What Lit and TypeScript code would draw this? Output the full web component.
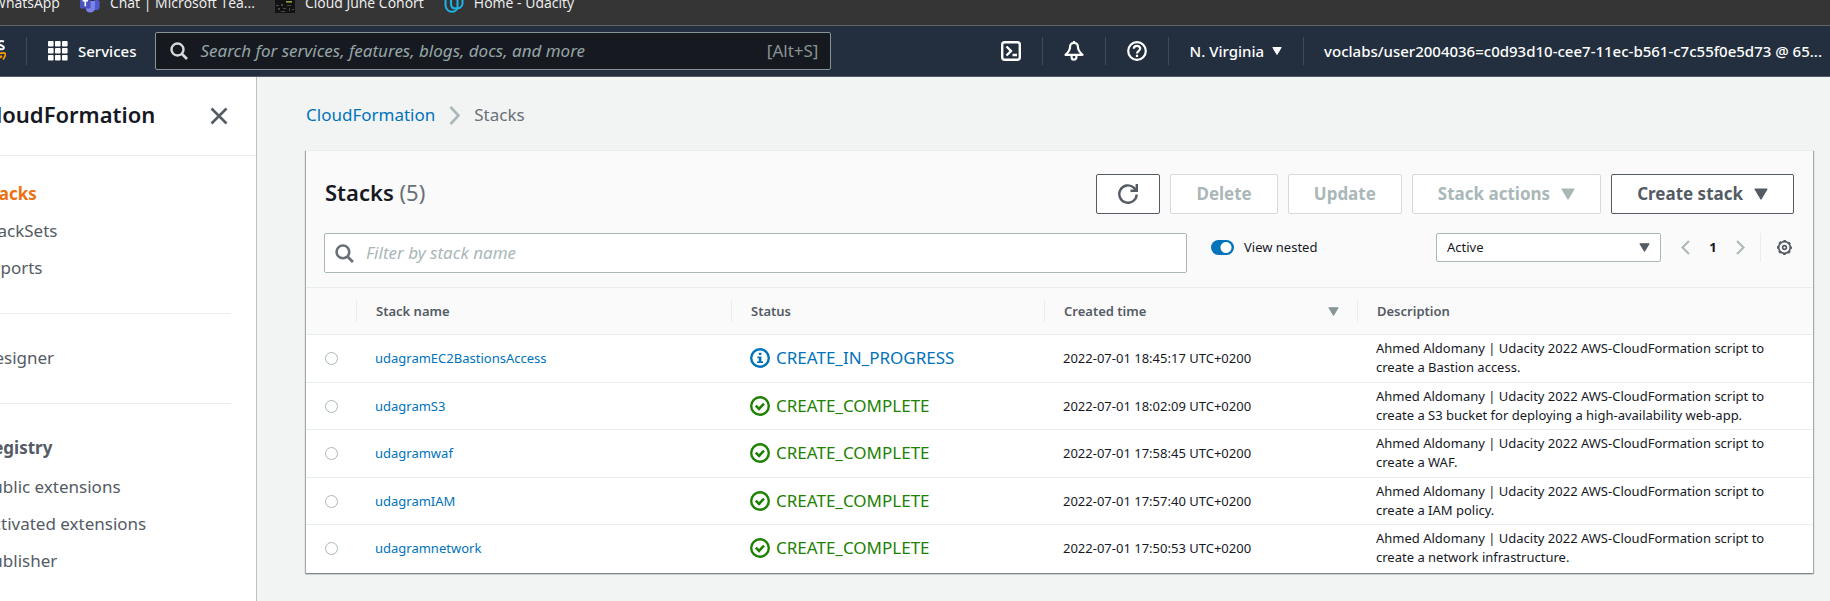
import { LitElement, html, css, svg } from "lit";
import { customElement, state } from "lit/decorators.js";

interface Stack {
  name: string;
  status: "CREATE_IN_PROGRESS" | "CREATE_COMPLETE";
  created: string;
  description: string;
}

const SCRIPT = "Ahmed Aldomany | Udacity 2022 AWS-CloudFormation script to create a ";

const STACKS: Stack[] = [
  { name: "udagramEC2BastionsAccess", status: "CREATE_IN_PROGRESS", created: "2022-07-01 18:45:17 UTC+0200", description: SCRIPT + "Bastion access." },
  { name: "udagramS3", status: "CREATE_COMPLETE", created: "2022-07-01 18:02:09 UTC+0200", description: SCRIPT + "S3 bucket for deploying a high-availability web-app." },
  { name: "udagramwaf", status: "CREATE_COMPLETE", created: "2022-07-01 17:58:45 UTC+0200", description: SCRIPT + "WAF." },
  { name: "udagramIAM", status: "CREATE_COMPLETE", created: "2022-07-01 17:57:40 UTC+0200", description: SCRIPT + "IAM policy." },
  { name: "udagramnetwork", status: "CREATE_COMPLETE", created: "2022-07-01 17:50:53 UTC+0200", description: SCRIPT + "network infrastructure." },
];

const searchIcon = html`<svg class="search-icon" viewBox="0 0 18 18" aria-hidden="true">
  <circle cx="7.5" cy="7.5" r="6" fill="none" stroke="currentColor" stroke-width="2.4" />
  <path d="M12 12l5 5" stroke="currentColor" stroke-width="2.6" />
</svg>`;

const caret = html`<svg class="caret" viewBox="0 0 12 10" aria-hidden="true">
  <path d="M1 .8h10L6 9.2z" fill="currentColor" stroke="currentColor" stroke-width="1.2" stroke-linejoin="round" />
</svg>`;

const infoIcon = html`<svg class="status-icon" viewBox="0 0 20 20" aria-hidden="true">
  <circle cx="10" cy="10" r="8.8" fill="none" stroke="currentColor" stroke-width="2.4" />
  <path d="M8.8 4.8h2.6v2.2H8.8zM7.4 8.4h4v4.8H13v1.8H7.2v-1.8h1.6v-3H7.4z" fill="currentColor" />
</svg>`;

const okIcon = html`<svg class="status-icon" viewBox="0 0 20 20" aria-hidden="true">
  <circle cx="10" cy="10" r="8.8" fill="none" stroke="currentColor" stroke-width="2.4" />
  <path d="M5.8 9.6l3.2 3.2 5-5.2" fill="none" stroke="currentColor" stroke-width="2.6" />
</svg>`;

@customElement("bookmarks-bar")
export class BookmarksBar extends LitElement {
  static styles = css`
    :host { display: block; background: #353535; border-bottom: 1px solid #606266; height: 25px; overflow: hidden; }
    .bar { display: flex; align-items: center; gap: 20px; height: 24px; margin-top: -9px; margin-left: -37px; }
    .item { display: flex; align-items: center; gap: 10px; color: #f1f1f1; text-decoration: none; white-space: nowrap;
      font: 14px/24px "Open Sans", "Noto Sans", sans-serif; }
    .icon { width: 20px; height: 20px; flex: none; }
  `;

  render() {
    return html`<nav class="bar" aria-label="Bookmarks">
      <a class="item" href="#">
        <svg class="icon" viewBox="0 0 20 20"><circle cx="10" cy="10" r="9" fill="#25d366" /></svg>WhatsApp</a>
      <a class="item" href="#">
        <svg class="icon" viewBox="0 0 20 20">
          <circle cx="16.5" cy="6" r="2.5" fill="#5059c9" />
          <path d="M13 8h6.6v6a3.4 3.4 0 0 1-6.6 1z" fill="#5059c9" />
          <path d="M6 8h9v7.500a4.800 4.800 0 0 1-9 1.500z" fill="#7b83eb" />
          <rect x="0" y="5" width="10.5" height="10.5" rx="1" fill="#4b53bc" />
          <path d="M2.6 7.6h5.4M5.3 7.6v5.6" stroke="#fff" stroke-width="1.6" />
        </svg>Chat | Microsoft Tea...</a>
      <a class="item" href="#">
        <svg class="icon" viewBox="0 0 20 20">
          <rect width="20" height="20" fill="#121212" />
          <path d="M1 12h3v1H1zM6 11h2v2H6zM12 12h4v1h-4zM3 15h2v2H3zM8 15h3v1H8zM14 15h1v3h-1zM17 16h2v1h-2zM6 18h4v1H6z" fill="#4a4a4a" />
          <path d="M11 8h6v1.6h-6z" fill="#8aa83a" />
        </svg>Cloud June Cohort</a>
      <a class="item" href="#">
        <svg class="icon" viewBox="0 0 20 20" fill="none" stroke="#1cb4e8" stroke-width="2">
          <path d="M7 1.5L1.5 4v8c0 4 3 6.8 6.5 6.8s5.5-2.5 5.500-5.5V3" />
          <path d="M7 1.5V11c0 3 2 4.500 5 4.500s6.5-1.5 6.500-5V4" />
        </svg>Home - Udacity</a>
    </nav>`;
  }
}

@customElement("aws-nav")
export class AwsNav extends LitElement {
  static styles = css`
    :host { display: block; background: #232f3e; border-bottom: 1px solid #545b64; color: #fff; overflow: hidden;
      font: 500 15px/20px "Noto Sans", sans-serif; }
    .nav { display: flex; align-items: center; height: 50px; }
    .logo { width: 40px; height: 26px; margin-left: -34px; flex: none; }
    .sep { width: 1px; height: 28px; background: #3f4b59; flex: none; }
    button { display: flex; align-items: center; justify-content: center; gap: 8px; background: none; border: 0; padding: 0;
      color: inherit; font: inherit; white-space: nowrap; flex: none; }
    .services { padding: 0 19px 0 21px; gap: 10px; }
    .first { margin-left: 20px; }
    .icon { width: 20px; height: 20px; }
    .search { display: flex; align-items: center; flex: 0 1 676px; box-sizing: border-box; height: 38px; padding: 0 12px 0 14px; gap: 12px;
      background: #16191f; border: 1px solid #879596; border-radius: 2px; color: #d5dbdb; }
    .search-icon { width: 18px; height: 18px; flex: none; }
    input { flex: 1; min-width: 0; padding: 0; border: 0; outline: 0; background: none; color: #fff; font: 17px/24px "Noto Sans", sans-serif; }
    input::placeholder { color: #95a5a6; font-style: italic; opacity: 1; }
    .key { color: #879596; font: 17px/24px "Noto Sans", sans-serif; }
    .spacer { flex: 1; }
    .tool { width: 62px; }
    .region { padding: 0 21px; }
    .caret { width: 10px; height: 10px; }
    .user { padding: 0 8px 0 20px; }
  `;

  render() {
    return html`<header class="nav">
      <svg class="logo" viewBox="0 0 40 26" role="img" aria-label="AWS">
        <path d="M38 3.5c-5-2-7 2.5-3 3.800s4 5.200-2 3.600" fill="none" stroke="#fff" stroke-width="2" />
        <path d="M2 16c10 8 24 9 34 2" fill="none" stroke="#f90" stroke-width="2.2" />
        <path d="M32 16c3-1 6-1.5 7-.5s-.5 4-2 6" fill="none" stroke="#f90" stroke-width="1.8" />
      </svg>
      <div class="sep first"></div>
      <button class="services">
        <svg class="icon" viewBox="0 0 20 20" fill="#fff" aria-hidden="true">
          ${[0, 7, 14].map((y) => [0, 7, 14].map((x) => svg`<rect x=${x} y=${y} width="5.6" height="5.6" rx=".8" />`))}
        </svg>
        Services
      </button>
      <label class="search">
        ${searchIcon}
        <input type="search" aria-label="Search" placeholder="Search for services, features, blogs, docs, and more" />
        <span class="key">[Alt+S]</span>
      </label>
      <div class="spacer"></div>
      <button class="tool" aria-label="CloudShell">
        <svg class="icon" viewBox="0 0 20 20" fill="none" stroke="#fff" stroke-width="2.4">
          <rect x="1.2" y="1.2" width="17.6" height="17.6" rx="2.5" />
          <path d="M5.5 5.5l4.500 4.500-4.500 4.500M11.500 14h4.500" />
        </svg>
      </button>
      <div class="sep"></div>
      <button class="tool" aria-label="Notifications">
        <svg class="icon" viewBox="0 0 20 20" fill="none" stroke="#fff" stroke-width="2.2" stroke-linejoin="round">
          <path d="M10 2C7.3 2 6 3.800 6 6.200 6 9.500 4.500 11 1.500 13.800h17C15.500 11 14 9.500 14 6.200 14 3.800 12.700 2 10 2zM10 0v2" />
          <path d="M7.6 14v2.200a2.400 2.400 0 0 0 4.800 0V14" />
        </svg>
      </button>
      <div class="sep"></div>
      <button class="tool" aria-label="Help">
        <svg class="icon" viewBox="0 0 20 20" fill="none" stroke="#fff" stroke-width="2.2">
          <circle cx="10" cy="10" r="8.8" />
          <path d="M6.8 7.8C6.8 5.900 8.200 4.900 10 4.900s3.200 1 3.200 2.700c0 2.200-3.200 2.200-3.200 5M10 13.800v2.200" stroke-width="2.2" />
        </svg>
      </button>
      <div class="sep"></div>
      <button class="region">N. Virginia ${caret}</button>
      <div class="sep"></div>
      <button class="user">voclabs/user2004036=c0d93d10-cee7-11ec-b561-c7c55f0e5d73 @ 65...</button>
    </header>`;
  }
}

@customElement("side-nav")
export class SideNav extends LitElement {
  static styles = css`
    :host { display: block; flex: none; width: 281px; margin-left: -25px; background: #fff; border-right: 1px solid #bac1c4; color: #545b64;
      font: 17px/37px "Noto Sans", sans-serif; }
    .head { display: flex; align-items: center; justify-content: space-between; height: 79px; box-sizing: border-box; padding: 0 28px 0 7px; border-bottom: 1px solid #eaeded; }
    h2 { margin: 0; padding-bottom: 4px; color: #16191f; font-size: 22px; line-height: 30px; font-weight: 600; }
    button { display: flex; padding: 0; border: 0; background: none; color: #545b64; }
    .close { width: 18px; height: 18px; }
    .links { list-style: none; margin: 0 25px 0 7px; padding: 25px 0 27px; border-bottom: 1px solid #eaeded; }
    .links:first-of-type { padding-top: 19px; }
    .links:last-child { border: 0; }
    a { color: inherit; text-decoration: none; white-space: nowrap; }
    .active { color: #ec7211; font-weight: 700; }
    .title { font-weight: 700; padding-bottom: 2px; }
  `;

  render() {
    return html`<nav aria-label="CloudFormation">
      <div class="head">
        <h2>CloudFormation</h2>
        <button aria-label="Close navigation">
          <svg class="close" viewBox="0 0 18 18"><path d="M1.5 1.5l15 15M16.5 1.5l-15 15" stroke="currentColor" stroke-width="2.6" /></svg>
        </button>
      </div>
      <ul class="links">
        <li><a class="active" href="#">Stacks</a></li>
        <li><a href="#">StackSets</a></li>
        <li><a href="#">Exports</a></li>
      </ul>
      <ul class="links">
        <li><a href="#">Designer</a></li>
      </ul>
      <ul class="links">
        <li class="title">Registry</li>
        <li><a href="#">Public extensions</a></li>
        <li><a href="#">Activated extensions</a></li>
        <li><a href="#">Publisher</a></li>
      </ul>
    </nav>`;
  }
}

@customElement("stacks-panel")
export class StacksPanel extends LitElement {
  @state() private nested = true;

  static styles = css`
    :host { display: block; background: #fafafa; color: #16191f; border-top: 1px solid #eaeded;
      box-shadow: 0 1px 1px #7b8a8c, 1px 1px 1px rgba(0, 28, 36, 0.3), -1px 1px 1px rgba(0, 28, 36, 0.3);
      font: 13px/19px "Noto Sans", sans-serif; }
    .top { display: flex; align-items: center; justify-content: space-between; padding: 23px 19px 0 19px; }
    h1 { margin: 0; padding-bottom: 4px; font-size: 22px; line-height: 30px; font-weight: 600; }
    .count { font-weight: 400; color: #687078; }
    .actions { display: flex; gap: 10px; }
    button { font: inherit; padding: 0; border: 0; background: none; display: flex; align-items: center; justify-content: center; color: #545b64; }
    .btn { box-sizing: border-box; height: 40px; padding: 0 25px; gap: 11px; background: #fff; border: 1px solid #545b64; border-radius: 2px;
      font-size: 17px; line-height: 24px; font-weight: 700; }
    .btn:disabled { color: #aab7b8; border-color: #d5dbdb; }
    .btn .caret { width: 14px; height: 12px; }
    .refresh { width: 20px; height: 20px; }
    .btn.square { padding: 0 21px; }
    .tools { display: flex; align-items: flex-start; padding: 19px 21px 14px 18px; }
    .filter { display: flex; align-items: center; flex: 0 1 863px; min-width: 0; box-sizing: border-box; height: 40px; padding: 0 10px; gap: 12px;
      background: #fff; border: 1px solid #aab7b8; border-radius: 2px; color: #687078; }
    .search-icon { width: 19px; height: 19px; flex: none; }
    .filter input { flex: 1; min-width: 0; padding: 0; border: 0; outline: 0; background: none; font: 17px/24px "Noto Sans", sans-serif; color: #16191f; }
    .filter input::placeholder { color: #aab7b8; font-style: italic; opacity: 1; }
    .toggle { display: flex; align-items: center; gap: 10px; height: 29px; margin-left: 24px; white-space: nowrap; }
    .toggle input { appearance: none; display: block; margin: 0; width: 23px; height: 15px; border-radius: 8px;
      background: radial-gradient(circle at 7px 50%, #fff 5px, #687078 6px); }
    .toggle input:checked { background: radial-gradient(circle at 15px 50%, #fff 5px, #0073bb 6px); }
    .spacer { flex: 1; }
    .select { display: grid; align-items: center; width: 225px; height: 29px; }
    .select > * { grid-area: 1 / 1; }
    select { appearance: none; width: 100%; height: 29px; box-sizing: border-box; padding: 0 10px; background: #fff; border: 1px solid #aab7b8; border-radius: 2px;
      font: inherit; color: #16191f; }
    .select .caret { width: 11px; height: 9px; justify-self: end; margin-right: 11px; color: #545b64; pointer-events: none; }
    .pager { display: flex; align-items: center; height: 29px; margin-left: 20px; }
    .chev { width: 9px; height: 15px; color: #aab7b8; }
    .page { width: 46px; text-align: center; font-weight: 700; }
    .gearbox { display: flex; align-items: center; height: 29px; margin-left: 15px; padding-left: 16px; border-left: 1px solid #eaeded; }
    .gear { width: 15px; height: 15px; }
    table { width: 100%; table-layout: fixed; border-collapse: separate; border-spacing: 0; border-top: 1px solid #eaeded; }
    .c-pick { width: 50px; }
    .c-name { width: 375px; }
    .c-status, .c-time { width: 313px; }
    th { padding: 12px 0; text-align: left; color: #545b64; font-weight: 600; border-bottom: 1px solid #eaeded; }
    .cell { display: flex; align-items: center; justify-content: space-between; height: 22px; padding: 0 18px 0 19px; border-left: 1px solid #eaeded; }
    th:first-child .cell { border-left-color: transparent; }
    th .caret { width: 11px; height: 9px; color: #879596; }
    td { height: 38px; padding: 4px 18px 4px 19px; background: #fff; border-bottom: 1px solid #eaeded; }
    tr:nth-child(odd) td { padding-bottom: 5px; }
    tr:last-child td { padding-bottom: 6px; border-bottom: 0; }
    td input { appearance: none; display: block; margin: 0; width: 13px; height: 13px; border: 1px solid #aab7b8; border-radius: 50%; background: #fff; }
    a { color: #0073bb; text-decoration: none; }
    .status { display: flex; align-items: center; gap: 6px; font-size: 17px; line-height: 24px; color: #1d8102; }
    .progress { color: #0073bb; }
    .status-icon { width: 20px; height: 20px; flex: none; }
  `;

  private row(s: Stack) {
    const busy = s.status === "CREATE_IN_PROGRESS";
    return html`<tr>
      <td><input type="radio" name="stack" aria-label=${s.name} /></td>
      <td><a href="#">${s.name}</a></td>
      <td><span class="status ${busy ? "progress" : ""}">${busy ? infoIcon : okIcon}${s.status}</span></td>
      <td>${s.created}</td>
      <td>${s.description}</td>
    </tr>`;
  }

  render() {
    return html`
      <div class="top">
        <h1>Stacks <span class="count">(${STACKS.length})</span></h1>
        <div class="actions">
          <button class="btn square" aria-label="Refresh">
            <svg class="refresh" viewBox="0 0 20 20" fill="none" stroke="currentColor" stroke-width="2.4">
              <path d="M18.7 10.5a8.700 8.700 0 1 1-2.900-6.900L18 6" />
              <path d="M18.8 0v6.800H12.500" />
            </svg>
          </button>
          <button class="btn" disabled>Delete</button>
          <button class="btn" disabled>Update</button>
          <button class="btn" disabled>Stack actions ${caret}</button>
          <button class="btn">Create stack ${caret}</button>
        </div>
      </div>
      <div class="tools">
        <label class="filter">
          ${searchIcon}
          <input type="search" aria-label="Filter stacks" placeholder="Filter by stack name" />
        </label>
        <label class="toggle">
          <input type="checkbox" role="switch" .checked=${this.nested}
            @change=${(e: Event) => (this.nested = (e.target as HTMLInputElement).checked)} />
          View nested
        </label>
        <div class="spacer"></div>
        <div class="select">
          <select aria-label="Stack status"><option>Active</option></select>
          ${caret}
        </div>
        <div class="pager">
          <button aria-label="Previous page"><svg class="chev" viewBox="0 0 9 15"><path d="M8 1L1.5 7.5 8 14" fill="none" stroke="currentColor" stroke-width="2" /></svg></button>
          <span class="page">1</span>
          <button aria-label="Next page"><svg class="chev" viewBox="0 0 9 15"><path d="M1 1l6.5 6.5L1 14" fill="none" stroke="currentColor" stroke-width="2" /></svg></button>
        </div>
        <div class="gearbox">
          <button aria-label="Preferences">
            <svg class="gear" viewBox="0 0 16 16" fill="none" stroke="currentColor">
              <circle cx="8" cy="8" r="6.2" stroke-width="1.8" />
              <circle cx="8" cy="8" r="7.2" stroke-width="1.6" stroke-dasharray="2.83 2.83" stroke-dashoffset="1.4" />
              <circle cx="8" cy="8" r="2" stroke-width="1.7" />
            </svg>
          </button>
        </div>
      </div>
      <table>
        <colgroup><col class="c-pick" /><col class="c-name" /><col class="c-status" /><col class="c-time" /><col /></colgroup>
        <thead>
          <tr>
            <th></th>
            <th><div class="cell">Stack name</div></th>
            <th><div class="cell">Status</div></th>
            <th><div class="cell">Created time ${caret}</div></th>
            <th><div class="cell">Description</div></th>
          </tr>
        </thead>
        <tbody>${STACKS.map((s) => this.row(s))}</tbody>
      </table>`;
  }
}

@customElement("app-root")
export class AppRoot extends LitElement {
  static styles = css`
    :host { display: flex; flex-direction: column; min-height: 100vh; overflow: hidden; background: #f2f3f3; }
    .body { display: flex; flex: 1; }
    main { flex: 1; min-width: 0; padding: 24px 17px 24px 49px; font: 17px/28px "Noto Sans", sans-serif; }
    .crumbs { display: flex; align-items: center; gap: 14px; margin-bottom: 21px; color: #687078; }
    .crumbs a { color: #0073bb; text-decoration: none; }
    .arrow { width: 11px; height: 19px; }
  `;

  render() {
    return html`
      <bookmarks-bar></bookmarks-bar>
      <aws-nav></aws-nav>
      <div class="body">
        <side-nav></side-nav>
        <main>
          <nav class="crumbs" aria-label="Breadcrumb">
            <a href="#">CloudFormation</a>
            <svg class="arrow" viewBox="0 0 11 19"><path d="M1.5 1l8 8.5-8 8.5" fill="none" stroke="#aab7b8" stroke-width="2.6" /></svg>
            <span>Stacks</span>
          </nav>
          <stacks-panel></stacks-panel>
        </main>
      </div>`;
  }
}
